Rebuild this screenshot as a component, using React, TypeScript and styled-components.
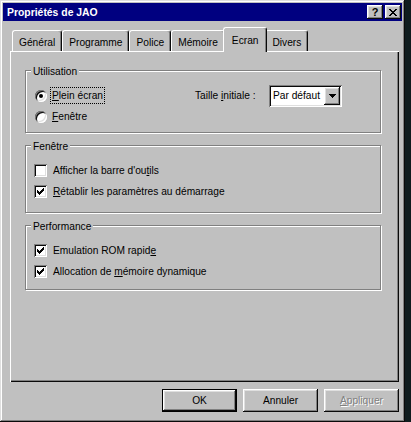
import styled, { createGlobalStyle } from "styled-components";

const GlobalStyle = createGlobalStyle`
  html, body {
    margin: 0;
    padding: 0;
    background: #0f1c1e;
    overflow: hidden;
  }
  body {
    font-family: "Liberation Sans", Arial, sans-serif;
    font-size: 10.2px;
    color: #000;
  }
`;

const raised = `
  box-shadow: inset -1px -1px #0a0a0a, inset 1px 1px #fff,
    inset -2px -2px #808080, inset 2px 2px #dfdfdf;
`;

const sunken = `
  box-shadow: inset 1px 1px #808080, inset -1px -1px #fff,
    inset 2px 2px #0a0a0a, inset -2px -2px #dfdfdf;
`;

const Desktop = styled.div`
  width: 411px;
  height: 422px;
  display: flex;
  background: #0f1c1e;
`;

const Window = styled.div`
  width: 405px;
  height: 422px;
  box-sizing: border-box;
  padding: 3px;
  background: #c0c0c0;
  box-shadow: inset -1px -1px #0a0a0a, inset 1px 1px #dfdfdf,
    inset -2px -2px #808080, inset 2px 2px #fff;
  display: flex;
  flex-direction: column;
`;

const TitleBar = styled.div`
  height: 18px;
  background: #000080;
  display: flex;
  align-items: center;
  padding: 0 1px 0 4px;
`;

const Title = styled.span`
  flex: 1;
  color: #fff;
  font-weight: bold;
  font-size: 10.4px;
`;

const TitleButton = styled.div`
  width: 16px;
  height: 14px;
  box-sizing: border-box;
  background: #c0c0c0;
  ${raised}
  display: flex;
  align-items: center;
  justify-content: center;
  font-weight: bold;
  font-size: 11px;
  line-height: 14px;
  margin-left: 2px;
`;

const Content = styled.div`
  flex: 1;
  display: flex;
  flex-direction: column;
  padding: 6px 3px 0 7px;
`;

const TabStrip = styled.div`
  height: 24px;
  display: flex;
  align-items: flex-end;
  padding-left: 2px;
  position: relative;
  z-index: 1;
`;

const Tab = styled.div<{ $active?: boolean }>`
  box-sizing: border-box;
  height: ${(p) => (p.$active ? 25 : 21)}px;
  margin: 0 ${(p) => (p.$active ? -2 : 0)}px ${(p) => (p.$active ? -1 : 0)}px;
  padding: ${(p) => (p.$active ? 6 : 5)}px ${(p) => (p.$active ? 8 : 6)}px 0;
  line-height: 13px;
  background: #c0c0c0;
  border-top: 1px solid #fff;
  border-left: 1px solid #fff;
  border-right: 1px solid #0a0a0a;
  border-radius: 3px 3px 0 0;
  box-shadow: inset -1px 0 #808080;
  position: relative;
  z-index: ${(p) => (p.$active ? 2 : 1)};
`;

const Panel = styled.div`
  height: 331px;
  box-sizing: border-box;
  padding: 19px 18px 0 15px;
  background: #c0c0c0;
  box-shadow: inset 1px 1px #fff, inset -1px -1px #0a0a0a,
    inset -2px -2px #808080;
  display: flex;
  flex-direction: column;
  gap: 12px;
`;

const Group = styled.div<{ $height: number }>`
  position: relative;
  height: ${(p) => p.$height}px;
  box-sizing: border-box;
  border: 1px solid #808080;
  box-shadow: inset 1px 1px #fff, 1px 1px #fff;
  padding: 14px 0 0 8px;
`;

const Legend = styled.span`
  position: absolute;
  top: -6px;
  left: 5px;
  padding: 0 2px;
  line-height: 13px;
  background: #c0c0c0;
`;

const Row = styled.div`
  height: 21px;
  display: flex;
  align-items: center;
`;

const OptionCell = styled.div<{ $width?: number }>`
  display: flex;
  align-items: center;
  width: ${(p) => (p.$width ? `${p.$width}px` : "auto")};
`;

const FieldLabel = styled.span`
  width: 74px;
`;

const Radio = styled.span<{ $checked?: boolean }>`
  position: relative;
  width: 12px;
  height: 12px;
  margin-left: 1px;
  margin-right: 4px;
  border-radius: 50%;
  background: #fff;
  box-shadow: inset 1px 1px #808080, inset -1px -1px #fff,
    inset 2px 2px #0a0a0a, inset -2px -2px #dfdfdf;

  &::after {
    content: "";
    display: ${(p) => (p.$checked ? "block" : "none")};
    position: absolute;
    left: 4px;
    top: 4px;
    width: 4px;
    height: 4px;
    border-radius: 50%;
    background: #000;
  }
`;

const CheckBox = styled.span`
  width: 13px;
  height: 13px;
  margin-right: 5px;
  background: #fff;
  ${sunken}
  display: flex;
  align-items: center;
  justify-content: center;
`;

const Label = styled.span<{ $focus?: boolean }>`
  line-height: 13px;
  padding: 1px;
  outline: ${(p) => (p.$focus ? "1px dotted #000" : "none")};
`;

const Select = styled.div`
  width: 73px;
  height: 22px;
  box-sizing: border-box;
  padding: 2px;
  background: #fff;
  ${sunken}
  display: flex;
  align-items: center;
`;

const SelectText = styled.span`
  flex: 1;
  padding-left: 2px;
`;

const SelectButton = styled.span`
  width: 16px;
  height: 18px;
  box-sizing: border-box;
  background: #c0c0c0;
  ${raised}
  display: flex;
  align-items: center;
  justify-content: center;
`;

const ButtonRow = styled.div`
  display: flex;
  justify-content: flex-end;
  gap: 6px;
  margin-top: 7px;
`;

const Button = styled.button<{ $default?: boolean }>`
  width: 75px;
  height: 23px;
  padding: 0;
  border: none;
  background: #c0c0c0;
  font-family: "Liberation Sans", Arial, sans-serif;
  font-size: 10.2px;
  color: #000;
  box-shadow: ${(p) =>
    p.$default
      ? "inset 0 0 0 1px #000, inset -2px -2px #0a0a0a, inset 2px 2px #fff, inset -3px -3px #808080, inset 3px 3px #dfdfdf"
      : "inset -1px -1px #0a0a0a, inset 1px 1px #fff, inset -2px -2px #808080, inset 2px 2px #dfdfdf"};

  &:disabled {
    color: #808080;
    text-shadow: 1px 1px #fff;
  }
`;

const CheckMark = () => (
  <svg width="7" height="7" viewBox="0 0 7 7" shapeRendering="crispEdges">
    <path
      d="M6 0h1v1h-1z M5 1h2v1h-2z M0 2h1v1h-1z M4 2h3v1h-3z M0 3h2v1h-2z M3 3h3v1h-3z M0 4h5v1h-5z M1 5h3v1h-3z M2 6h1v1h-1z"
      fill="#000"
    />
  </svg>
);

const CloseGlyph = () => (
  <svg width="8" height="7" viewBox="0 0 8 7" shapeRendering="crispEdges">
    <path
      d="M0 0h2v1h-2z M6 0h2v1h-2z M1 1h2v1h-2z M5 1h2v1h-2z M2 2h4v1h-4z M3 3h2v1h-2z M2 4h4v1h-4z M1 5h2v1h-2z M5 5h2v1h-2z M0 6h2v1h-2z M6 6h2v1h-2z"
      fill="#000"
    />
  </svg>
);

const ArrowGlyph = () => (
  <svg width="7" height="4" viewBox="0 0 7 4" shapeRendering="crispEdges">
    <path d="M0 0h7v1h-7z M1 1h5v1h-5z M2 2h3v1h-3z M3 3h1v1h-1z" fill="#000" />
  </svg>
);

const tabs = ["Général", "Programme", "Police", "Mémoire", "Ecran", "Divers"];

const Check = ({ checked, children }: { checked?: boolean; children: React.ReactNode }) => (
  <Row>
    <CheckBox>{checked && <CheckMark />}</CheckBox>
    <Label>{children}</Label>
  </Row>
);

export default function App() {
  return (
    <Desktop>
      <GlobalStyle />
      <Window>
        <TitleBar>
          <Title>Propriétés de JAO</Title>
          <TitleButton>?</TitleButton>
          <TitleButton>
            <CloseGlyph />
          </TitleButton>
        </TitleBar>

        <Content>
          <TabStrip>
            {tabs.map((t) => (
              <Tab key={t} $active={t === "Ecran"}>
                {t}
              </Tab>
            ))}
          </TabStrip>

          <Panel>
            <Group $height={63}>
              <Legend>Utilisation</Legend>
              <Row>
                <OptionCell $width={161}>
                  <Radio $checked />
                  <Label $focus>
                    <u>P</u>lein écran
                  </Label>
                </OptionCell>
                <FieldLabel>
                  Taille <u>i</u>nitiale :
                </FieldLabel>
                <Select>
                  <SelectText>Par défaut</SelectText>
                  <SelectButton>
                    <ArrowGlyph />
                  </SelectButton>
                </Select>
              </Row>
              <Row>
                <OptionCell>
                  <Radio />
                  <Label>
                    <u>F</u>enêtre
                  </Label>
                </OptionCell>
              </Row>
            </Group>

            <Group $height={68}>
              <Legend>Fenêtre</Legend>
              <Check>
                Afficher la barre d'ou<u>t</u>ils
              </Check>
              <Check checked>
                <u>R</u>établir les paramètres au démarrage
              </Check>
            </Group>

            <Group $height={65}>
              <Legend>Performance</Legend>
              <Check checked>
                Emulation ROM rapid<u>e</u>
              </Check>
              <Check checked>
                Allocation de <u>m</u>émoire dynamique
              </Check>
            </Group>
          </Panel>

          <ButtonRow>
            <Button $default>OK</Button>
            <Button>Annuler</Button>
            <Button disabled>
              <u>A</u>ppliquer
            </Button>
          </ButtonRow>
        </Content>
      </Window>
    </Desktop>
  );
}
